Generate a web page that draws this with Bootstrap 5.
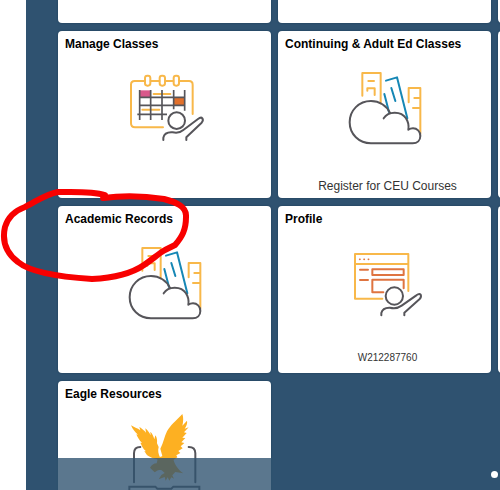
<!DOCTYPE html>
<html lang="en">
<head>
<meta charset="utf-8">
<meta name="viewport" content="width=device-width, initial-scale=1">
<title>Student Homepage</title>
<link href="https://cdn.jsdelivr.net/npm/bootstrap@5.3.0/dist/css/bootstrap.min.css" rel="stylesheet">
<style>
  body { font-family: "Liberation Sans", Arial, sans-serif; background: #fff; }
  .homepage { margin-left: 26px; padding-left: 32px; background: #2f5270; }
  .tiles {
    display: grid;
    grid-template-columns: repeat(3, minmax(213px, 1fr));
    grid-template-rows: 23px;
    grid-auto-rows: 167px;
    gap: 8px 7px;
  }
  .tile { background: #fff; border-radius: 4px; color: #000; padding: 5px 7px 4px; box-shadow: 0 0 2px #1d3c56; }
  .tile-cut { border-radius: 0 0 4px 4px; }
  .tile-title { font-size: 12px; line-height: 16px; font-weight: 700; }
  .tile-icon { width: 89px; height: 85px; margin-top: 13px; }
  .tile-icon-high { margin-top: 3px; }
  .tile-note { font-size: 12px; line-height: 16px; color: #333; padding-left: 6px; }
  .tile-id { font-size: 10px; padding-bottom: 3px; }
  .pager { height: 32px; margin-left: 26px; padding-right: 2px; background: rgba(47, 82, 112, .79); }
  .pager-dot { width: 7px; height: 7px; background: #fff; }
  .tile-icon, .pen { fill: none; stroke-linecap: round; stroke-linejoin: round; }
  .tile-icon { stroke-width: 6; }
  .gold { stroke: #f8b84a; }
  .rust { stroke: #df7440; }
  .blue { stroke: #1687b5; }
  .dark { stroke: #56555a; }
  .pen { stroke: #f80000; stroke-width: 6; pointer-events: none; }
</style>
<script src="https://cdn.jsdelivr.net/npm/bootstrap@5.3.0/dist/js/bootstrap.bundle.min.js"></script>
</head>
<body>
<svg class="d-none" aria-hidden="true">
  <symbol id="cloud-books" viewBox="0 0 267 255">
    <g class="gold">
      <path d="M67 92V24H122V115M85 48H102M82 77V70H104V90"/>
      <path d="M206 112V69H241V205M223 99H241M219 129H241"/>
    </g>
    <path class="blue" d="M138 47L171 37L202 160M133 87L147 141M154 69L166 108"/>
    <path class="dark" d="M150 144C140 122 118 108 93 108C57 108 29 136 29 172C29 208 57 235 93 235H218C232 235 241 226 241 213C241 199 231 190 219 190Q211 190 205 194Q208 174 198 160C184 138 145 137 131 160"/>
  </symbol>
</svg>
<div class="position-relative vh-100 overflow-hidden">
  <main class="homepage h-100 overflow-hidden">
    <div class="tiles">
      <div class="tile tile-cut"></div>
      <div class="tile tile-cut"></div>
      <div class="tile tile-cut"></div>

      <a href="#classes" class="tile d-flex flex-column text-decoration-none">
        <h2 class="tile-title mb-0">Manage Classes</h2>
        <svg class="tile-icon align-self-center" viewBox="0 0 267 255" aria-hidden="true">
          <path fill="#d9588b" d="M60 76H92V96H60Z"/>
          <path fill="#e2702b" d="M161 98H194V121H161Z"/>
          <g class="gold">
            <path d="M218 147V59Q218 48 207 48H178M160 48H136M118 48H92M74 48H44Q33 48 33 59V175Q33 187 45 187H129"/>
            <rect x="75" y="32" width="16" height="30" rx="7"/>
            <rect x="119" y="32" width="16" height="30" rx="7"/>
            <rect x="161" y="32" width="16" height="30" rx="7"/>
            <path d="M101 87H151M67 134H118"/>
          </g>
          <path class="dark" stroke-width="5" stroke-linecap="butt" d="M59 75V165M92 75V165M126 75V165M161 75V133M194 75V137M59 97H194M59 121H194M52 148H141"/>
          <g class="dark">
            <circle cx="170" cy="167" r="25"/>
            <path d="M130 225V218Q134 200 158 202Q178 206 190 195L234 162Q243 155 247 160Q251 166 245 173L199 217V225"/>
          </g>
        </svg>
      </a>

      <a href="#continuing" class="tile d-flex flex-column text-decoration-none">
        <h2 class="tile-title mb-0">Continuing &amp; Adult Ed Classes</h2>
        <svg class="tile-icon align-self-center" aria-hidden="true"><use href="#cloud-books"/></svg>
        <span class="tile-note mt-auto text-center">Register for CEU Courses</span>
      </a>
      <div class="tile"></div>

      <a href="#records" class="tile d-flex flex-column text-decoration-none">
        <h2 class="tile-title mb-0">Academic Records</h2>
        <svg class="tile-icon align-self-center" aria-hidden="true"><use href="#cloud-books"/></svg>
      </a>

      <a href="#profile" class="tile d-flex flex-column text-decoration-none">
        <h2 class="tile-title mb-0">Profile</h2>
        <svg class="tile-icon align-self-center" viewBox="-15 -15 267 255" aria-hidden="true">
          <path class="gold" d="M190 138V27H30V161H112M30 57H190"/>
          <path class="rust" stroke-width="5" d="M44 43H45M57 43H58M70 43H71"/>
          <path class="rust" d="M45 74H69M45 105H69M82 73H176V90H82ZM176 130V104H82V142H115"/>
          <g class="dark">
            <circle cx="148" cy="153" r="26"/>
            <path d="M109 211V204Q113 187 135 188Q155 193 170 182L214 151Q223 144 227 149Q230 156 224 162L178 203V211"/>
          </g>
        </svg>
        <span class="tile-note tile-id mt-auto text-center">W212287760</span>
      </a>
      <div class="tile"></div>

      <a href="#eagle" class="tile d-flex flex-column text-decoration-none">
        <h2 class="tile-title mb-0">Eagle Resources</h2>
        <svg class="tile-icon tile-icon-high align-self-center" viewBox="0 0 267 255" aria-hidden="true">
          <path class="dark" d="M61 126Q42 126 42 145V232M206 126Q226 126 226 145V232"/>
          <path class="dark" stroke-linejoin="miter" d="M28 270V245H106L112 251H154L160 245H238V270"/>
          <g fill="#fdb022">
            <path d="M33 61C42 67 52 69 61 76L58 65C66 71 73 76 78 83L76 70C83 76 88 83 92 91L91 80C97 86 101 94 103 103L106 91C111 98 112 106 111 115L116 126C113 136 115 147 120 157L114 164C102 160 88 158 79 148L73 138L78 139C68 130 65 121 61 113L66 114C57 105 53 97 49 88L54 89C44 81 38 72 33 61Z"/>
            <path d="M187 27C168 47 150 62 141 79C133 94 131 112 121 131L128 157L160 165L172 157L169 151L181 144L175 138L188 130L182 124L193 114L184 112L196 99L187 98L200 84L192 82L206 67L194 71C199 63 203 55 201 47L187 62C190 50 191 38 187 27Z"/>
            <path d="M114 158L128 153L160 161C164 181 175 193 190 205L166 201L157 211L162 221L154 217L148 227L143 217L137 227L134 216L116 223L124 210L134 204L125 196C113 193 108 200 104 202L96 194L90 188C95 180 101 175 110 175Z"/>
          </g>
        </svg>
      </a>
    </div>
  </main>
  <div class="pager position-absolute bottom-0 start-0 end-0 d-flex align-items-center justify-content-end">
    <span class="pager-dot rounded-circle"></span>
  </div>
  <svg class="pen position-absolute top-0 start-0" width="200" height="290" viewBox="0 0 200 290" aria-hidden="true">
    <path d="M105 195C92 191 74 192 58 192C46 194 37 201 25 207C14 211 8 217 5 227C2 240 5 252 18 262C30 272 60 277 92 279C112 278 131 274 144 265C153 259 158 254 165 250L175 245C182 237 186 230 186 217C187 206 175 202 164 199C145 196 125 195 103 198"/>
  </svg>
</div>
</body>
</html>
